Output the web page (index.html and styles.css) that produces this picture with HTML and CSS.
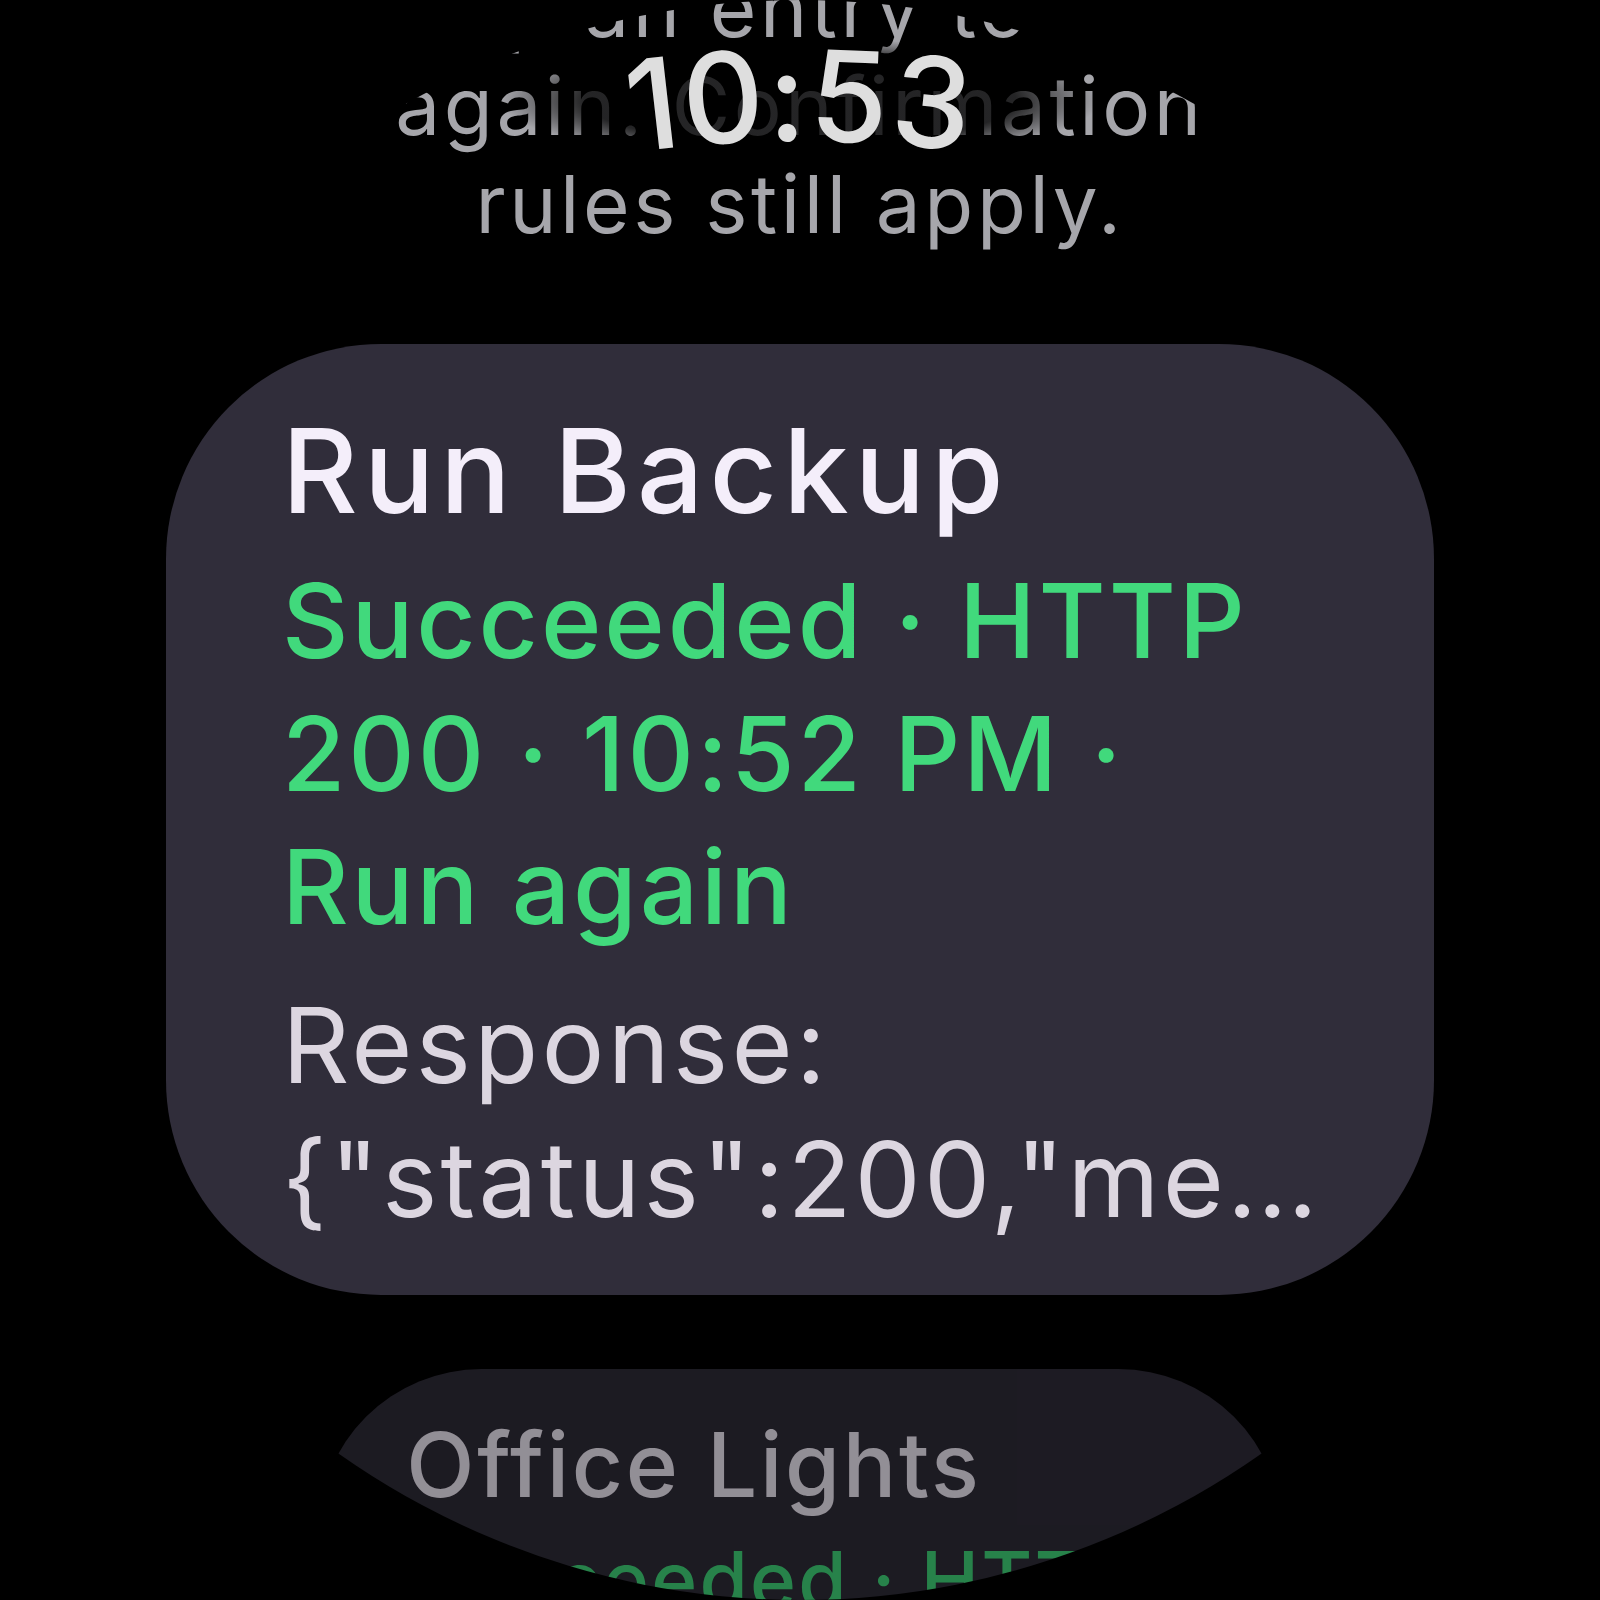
FILE: index.html
```html
<!DOCTYPE html>
<html lang="en">
<head>
<meta charset="utf-8">
<title>Runs</title>
<link rel="stylesheet" href="styles.css">
</head>
<body>
<div class="screen">
  <div class="list">
    <p class="prev">
      <span class="line">Tap an entry to run</span>
      <span class="line">again. Confirmation</span>
      <span class="line">rules still apply.</span>
    </p>
    <div class="card">
      <div class="title">Run Backup</div>
      <div class="status">Succeeded · HTTP 200 · 10:52 PM · Run again</div>
      <div class="response">Response: {"status":200,"me…</div>
    </div>
    <div class="card card-next">
      <div class="title">Office Lights</div>
      <div class="status">Succeeded · HTTP 200 · 10:41 PM · Run again</div>
    </div>
  </div>
  <div class="scrim"></div>
  <svg class="time" viewBox="0 0 1600 260" width="1600" height="260" aria-label="10:53">
    <defs>
      <path id="timeArc" d="M -450 1391 A 1250 1250 0 0 1 2050 1391"/>
    </defs>
    <text class="time-text"><textPath href="#timeArc" startOffset="50%" text-anchor="middle">10:53</textPath></text>
  </svg>
</div>
</body>
</html>
```
FILE: styles.css
```css
html, body {
  margin: 0;
  padding: 0;
  background: #000;
}

body {
  font-family: Inter, Roboto, "Liberation Sans", sans-serif;
}

.screen {
  position: relative;
  width: 1600px;
  height: 1600px;
  border-radius: 50%;
  overflow: hidden;
  background: #000;
}

.list {
  display: flex;
  flex-direction: column;
  align-items: center;
}

.prev {
  margin: -41px 0 0;
  font-size: 80px;
  line-height: 98px;
  letter-spacing: 0.045em;
  color: #a6a6ab;
  text-align: center;
  font-weight: 400;
}

.line {
  display: block;
  white-space: nowrap;
}

.card {
  box-sizing: border-box;
  width: 1268px;
  margin-top: 91px;
  padding: 57px 96px 49px 116px;
  border-radius: 215px;
  background: #302d3a;
  display: flex;
  flex-direction: column;
}

.title {
  font-size: 117px;
  line-height: 140px;
  font-weight: 500;
  letter-spacing: 0.052em;
  color: #f4eefa;
  white-space: nowrap;
}

.status {
  margin-top: 13px;
  max-width: 1010px;
  font-size: 103px;
  line-height: 133px;
  font-weight: 500;
  letter-spacing: 0.028em;
  color: #41d97c;
}

.response {
  margin-top: 25px;
  font-size: 105px;
  line-height: 134px;
  font-weight: 400;
  letter-spacing: 0.03em;
  color: #dcd6e0;
}

.card-next {
  margin-top: 74px;
  transform: scale(0.76);
  transform-origin: top center;
  opacity: 0.6;
}

.card-next .title {
  letter-spacing: 0.03em;
}

.scrim {
  position: absolute;
  left: 500px;
  top: 38px;
  width: 600px;
  height: 124px;
  background: radial-gradient(closest-side, rgba(0,0,0,0.78) 72%, rgba(0,0,0,0) 100%);
}

.time {
  position: absolute;
  left: 0;
  top: 0;
}

.time-text {
  font-family: Inter, Roboto, "Liberation Sans", sans-serif;
  font-size: 126px;
  font-weight: 500;
  letter-spacing: 2px;
  fill: #dedede;
}
```
